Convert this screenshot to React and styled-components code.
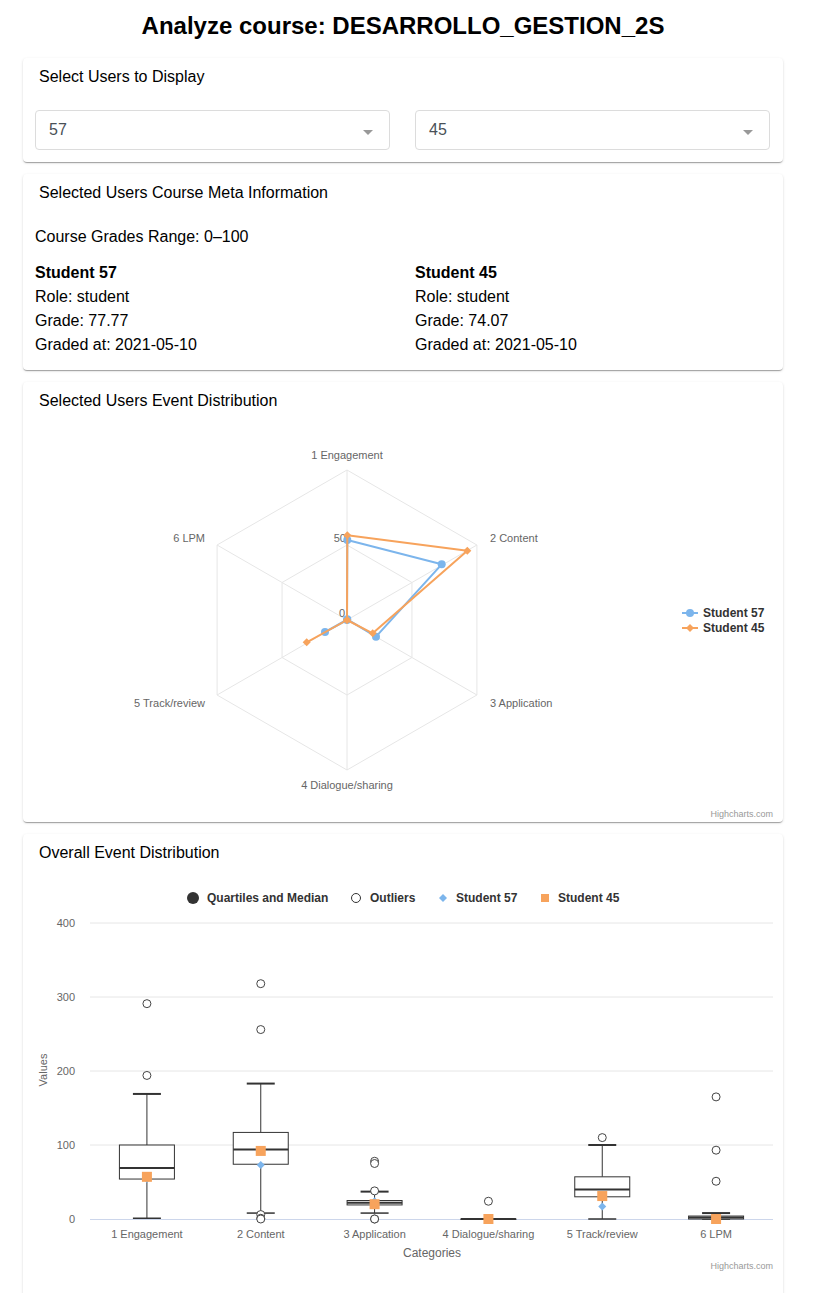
import React from "react";
import styled, { createGlobalStyle } from "styled-components";

const GlobalStyle = createGlobalStyle`
  body {
    margin: 0;
    background: #fff;
    font-family: "Liberation Sans", Arial, sans-serif;
    color: #000;
  }
`;

const Page = styled.div`
  width: 760px;
  padding: 12px 0 0 23px;
`;

const Title = styled.h1`
  margin: 0 0 18px;
  font-size: 24px;
  line-height: 28px;
  font-weight: 700;
  text-align: center;
`;

const Card = styled.section`
  background: #fff;
  border-radius: 4px;
  box-shadow: 0 2px 1px -1px rgba(0, 0, 0, 0.2), 0 1px 1px 0 rgba(0, 0, 0, 0.14),
    0 1px 3px 0 rgba(0, 0, 0, 0.12);
  margin-bottom: 12px;
  padding-bottom: ${props => props.bottom || 0}px;
`;

const CardHeader = styled.div`
  padding: 9px 16px 7px;
  font-size: 16px;
  line-height: 20px;
`;

const SelectRow = styled.div`
  display: grid;
  grid-template-columns: 1fr 1fr;
  gap: 25px;
  padding: 16px 13px 12px 12px;
`;

const Select = styled.div`
  height: 40px;
  box-sizing: border-box;
  border: 1px solid #dcdcdc;
  border-radius: 4px;
  display: flex;
  align-items: center;
  justify-content: space-between;
  padding: 0 16px 0 13px;
  font-size: 16px;
  color: #495057;
`;

const Caret = styled.span`
  width: 0;
  height: 0;
  margin-top: 4px;
  border-left: 5px solid transparent;
  border-right: 5px solid transparent;
  border-top: 5px solid #999;
`;

const MetaBody = styled.div`
  padding: 15px 12px 13px;
  font-size: 16px;
  line-height: 24px;
`;

const StudentGrid = styled.div`
  display: grid;
  grid-template-columns: 380px 1fr;
  margin-top: 12px;
`;

const StudentName = styled.div`
  font-weight: 700;
`;

const ChartSvg = styled.svg`
  display: block;
  margin-top: 2px;
  font-family: "Liberation Sans", Arial, sans-serif;
`;

const grid = "#e6e6e6";
const blue = "#7cb5ec";
const orange = "#f7a35c";

const hexPoints = (cx, cy, r) =>
  [-90, -30, 30, 90, 150, 210]
    .map(a => {
      const t = (a * Math.PI) / 180;
      return `${cx + r * Math.cos(t)},${cy + r * Math.sin(t)}`;
    })
    .join(" ");

const Diamond = ({ x, y, s = 4, color }) => (
  <path d={`M${x} ${y - s}L${x + s} ${y}L${x} ${y + s}L${x - s} ${y}Z`} fill={color} />
);

const RadarChart = () => {
  const cx = 324;
  const cy = 200;
  const s57 = [
    [324.3, 120],
    [418.7, 144.3],
    [353, 216.7],
    [324.3, 199.3],
    [302, 212],
    [324, 200]
  ];
  const s45 = [
    [324.3, 115.3],
    [444.3, 130.7],
    [349.7, 213.3],
    [324, 200],
    [283.7, 222.3],
    [324, 200]
  ];
  const path = pts => pts.map((p, i) => `${i ? "L" : "M"}${p[0]} ${p[1]}`).join("") + "Z";
  const spokes = [-90, -30, 30, 90, 150, 210].map(a => {
    const t = (a * Math.PI) / 180;
    return [cx + 150 * Math.cos(t), cy + 150 * Math.sin(t)];
  });
  const label = { fontSize: 11, fill: "#666" };
  return (
    <ChartSvg width="760" height="400">
      <polygon points={hexPoints(cx, cy, 150)} fill="none" stroke={grid} />
      <polygon points={hexPoints(cx, cy, 75)} fill="none" stroke={grid} />
      {spokes.map((p, i) => (
        <line key={i} x1={cx} y1={cy} x2={p[0]} y2={p[1]} stroke={grid} />
      ))}
      <text x="323" y="122" textAnchor="end" {...label}>50</text>
      <text x="322" y="197" textAnchor="end" {...label}>0</text>
      <text x="324" y="39" textAnchor="middle" {...label}>1 Engagement</text>
      <text x="467" y="122" {...label}>2 Content</text>
      <text x="467" y="287" {...label}>3 Application</text>
      <text x="324" y="369" textAnchor="middle" {...label}>4 Dialogue/sharing</text>
      <text x="182" y="287" textAnchor="end" {...label}>5 Track/review</text>
      <text x="182" y="122" textAnchor="end" {...label}>6 LPM</text>

      <path d={path(s57)} fill="none" stroke={blue} strokeWidth="2" strokeLinejoin="round" />
      {s57.map((p, i) => (
        <circle key={i} cx={p[0]} cy={p[1]} r="4" fill={blue} />
      ))}
      <path d={path(s45)} fill="none" stroke={orange} strokeWidth="2" strokeLinejoin="round" />
      {s45.map((p, i) => (
        <Diamond key={i} x={p[0]} y={p[1]} color={orange} />
      ))}

      <line x1="659" y1="193" x2="675" y2="193" stroke={blue} strokeWidth="2" />
      <circle cx="667" cy="193" r="4" fill={blue} />
      <text x="680" y="197" fontSize="12" fontWeight="700" fill="#333">Student 57</text>
      <line x1="659" y1="208" x2="675" y2="208" stroke={orange} strokeWidth="2" />
      <Diamond x={667} y={208} color={orange} />
      <text x="680" y="212" fontSize="12" fontWeight="700" fill="#333">Student 45</text>

      <text x="750" y="397" textAnchor="end" fontSize="9" fill="#999">Highcharts.com</text>
    </ChartSvg>
  );
};

const boxes = [
  { name: "1 Engagement", low: 1, q1: 54, med: 69, q3: 100, high: 169, out: [291, 194], s57: 54, s45: 57 },
  { name: "2 Content", low: 8, q1: 74, med: 94, q3: 117, high: 183, out: [318, 256, 6, 1, 0], s57: 73, s45: 92 },
  { name: "3 Application", low: 8, q1: 19, med: 22, q3: 25, high: 37, out: [78, 75, 38, 0, 0], s57: 24, s45: 20 },
  { name: "4 Dialogue/sharing", low: 0, q1: 0, med: 0, q3: 0, high: 0, out: [24], s57: 0, s45: 0 },
  { name: "5 Track/review", low: 0, q1: 30, med: 40, q3: 57, high: 100, out: [110], s57: 17, s45: 31 },
  { name: "6 LPM", low: 0, q1: 0, med: 2, q3: 4, high: 8, out: [165, 93, 51], s57: 0, s45: 0 }
];

const BoxChart = () => {
  const left = 67;
  const right = 750;
  const zero = 347;
  const yv = v => zero - v * 0.74;
  const step = (right - left) / 6;
  const label = { fontSize: 11, fill: "#666" };
  const line = "#333";
  return (
    <ChartSvg width="760" height="400">
      <circle cx="170" cy="26" r="6" fill="#333" />
      <text x="184" y="30" fontSize="12" fontWeight="700" fill="#333">Quartiles and Median</text>
      <circle cx="333" cy="26" r="4.5" fill="#fff" stroke="#333" />
      <text x="347" y="30" fontSize="12" fontWeight="700" fill="#333">Outliers</text>
      <Diamond x={420} y={26} color={blue} />
      <text x="433" y="30" fontSize="12" fontWeight="700" fill="#333">Student 57</text>
      <rect x="518" y="22" width="8" height="8" fill={orange} />
      <text x="535" y="30" fontSize="12" fontWeight="700" fill="#333">Student 45</text>

      {[0, 100, 200, 300, 400].map(v => (
        <g key={v}>
          {v > 0 && <line x1={left} x2={right} y1={yv(v)} y2={yv(v)} stroke={grid} />}
          <text x="52" y={yv(v) + 4} textAnchor="end" {...label}>{v}</text>
        </g>
      ))}
      <line x1={left} x2={right} y1={zero + 0.5} y2={zero + 0.5} stroke="#ccd6eb" />
      <text
        x="20"
        y="198"
        textAnchor="middle"
        fontSize="11"
        fill="#666"
        transform="rotate(-90 20 198)"
        dy="4"
      >
        Values
      </text>

      {boxes.map((b, i) => {
        const x = left + step * (i + 0.5);
        return (
          <g key={b.name}>
            <line x1={x} x2={x} y1={yv(b.high)} y2={yv(b.q3)} stroke={line} />
            <line x1={x} x2={x} y1={yv(b.q1)} y2={yv(b.low)} stroke={line} />
            <line x1={x - 14} x2={x + 14} y1={yv(b.high)} y2={yv(b.high)} stroke={line} strokeWidth="2" />
            <line x1={x - 14} x2={x + 14} y1={yv(b.low)} y2={yv(b.low)} stroke={line} strokeWidth="1.5" />
            <rect
              x={x - 27.5}
              y={yv(b.q3)}
              width="55"
              height={Math.max(yv(b.q1) - yv(b.q3), 0.5)}
              fill="#fff"
              stroke={line}
            />
            <line x1={x - 27.5} x2={x + 27.5} y1={yv(b.med)} y2={yv(b.med)} stroke={line} strokeWidth="2" />
            {b.out.map((o, k) => (
              <circle key={k} cx={x} cy={yv(o)} r="4" fill="#fff" stroke="#444" />
            ))}
            <Diamond x={x} y={yv(b.s57)} color={blue} />
            <rect x={x - 5} y={yv(b.s45) - 5} width="10" height="10" fill={orange} />
            <text x={x} y="366" textAnchor="middle" {...label}>{b.name}</text>
          </g>
        );
      })}
      <text x="409" y="385" textAnchor="middle" fontSize="12" fill="#666">Categories</text>
      <text x="750" y="397" textAnchor="end" fontSize="9" fill="#999">Highcharts.com</text>
    </ChartSvg>
  );
};

const students = [
  { id: 57, role: "student", grade: "77.77", date: "2021-05-10" },
  { id: 45, role: "student", grade: "74.07", date: "2021-05-10" }
];

const App = () => (
  <Page>
    <GlobalStyle />
    <Title>Analyze course: DESARROLLO_GESTION_2S</Title>

    <Card>
      <CardHeader>Select Users to Display</CardHeader>
      <SelectRow>
        {students.map(s => (
          <Select key={s.id}>
            {s.id}
            <Caret />
          </Select>
        ))}
      </SelectRow>
    </Card>

    <Card>
      <CardHeader>Selected Users Course Meta Information</CardHeader>
      <MetaBody>
        <div>Course Grades Range: 0–100</div>
        <StudentGrid>
          {students.map(s => (
            <div key={s.id}>
              <StudentName>Student {s.id}</StudentName>
              <div>Role: {s.role}</div>
              <div>Grade: {s.grade}</div>
              <div>Graded at: {s.date}</div>
            </div>
          ))}
        </StudentGrid>
      </MetaBody>
    </Card>

    <Card bottom={2}>
      <CardHeader>Selected Users Event Distribution</CardHeader>
      <RadarChart />
    </Card>

    <Card bottom={30}>
      <CardHeader>Overall Event Distribution</CardHeader>
      <BoxChart />
    </Card>
  </Page>
);

export default App;
